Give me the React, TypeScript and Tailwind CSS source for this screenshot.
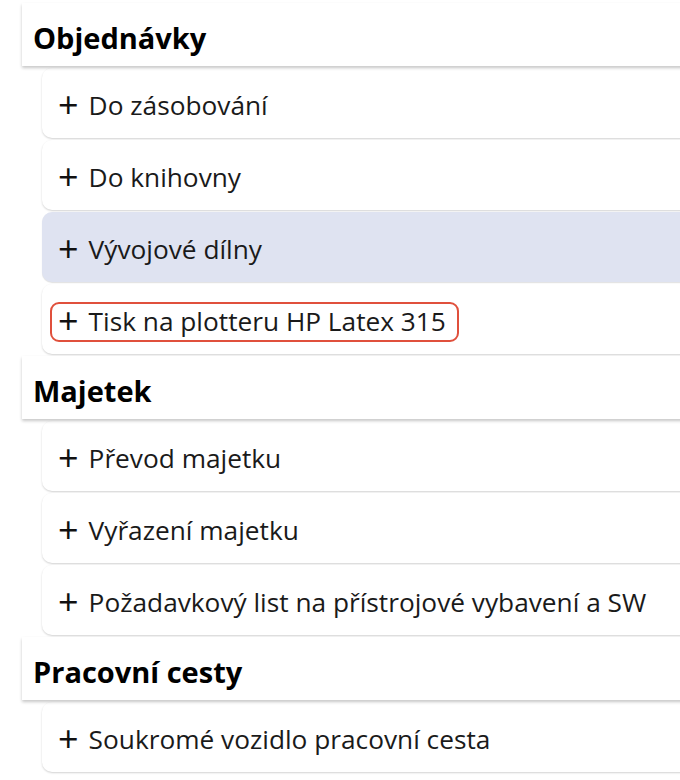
import React from 'react';

type Item = { label: string; active?: boolean; marked?: boolean };
type Section = { title: string; items: Item[] };

const sections: Section[] = [
  {
    title: 'Objednávky',
    items: [
      { label: 'Do zásobování' },
      { label: 'Do knihovny' },
      { label: 'Vývojové dílny', active: true },
      { label: 'Tisk na plotteru HP Latex 315', marked: true },
    ],
  },
  {
    title: 'Majetek',
    items: [
      { label: 'Převod majetku' },
      { label: 'Vyřazení majetku' },
      { label: 'Požadavkový list na přístrojové vybavení a SW' },
    ],
  },
  {
    title: 'Pracovní cesty',
    items: [{ label: 'Soukromé vozidlo pracovní cesta' }],
  },
];

const MenuItem: React.FC<{ item: Item }> = ({ item }) => {
  const content = (
    <>
      <span className="mr-[10px] text-[36px] leading-none font-normal text-[#111] -mt-[3px]">+</span>
      <span>{item.label}</span>
    </>
  );
  return (
    <div
      className={`ml-[42px] mb-[2px] h-[70px] rounded-[10px] flex items-center pt-[6px] ${
        item.active ? 'bg-[#dfe3f1] shadow-[0_1px_1px_rgba(0,0,0,0.12)]' : 'bg-white shadow-[0_1px_2px_rgba(0,0,0,0.18)]'
      } ${item.marked ? 'pl-[8px]' : 'pl-[16px]'}`}
    >
      {item.marked ? (
        <span className="flex items-center h-[40px] pl-[6px] pr-[11px] border-2 border-[#e0503c] rounded-[9px]">
          {content}
        </span>
      ) : (
        content
      )}
    </div>
  );
};

export default function App() {
  return (
    <div className="w-full h-[780px] overflow-hidden bg-white">
      <div
        className="w-[720px] pt-[3px] text-[26.25px] text-[#1a1a1a]"
        style={{ fontFamily: '"Open Sans", "Noto Sans", sans-serif' }}
      >
        {sections.map((section) => (
          <div key={section.title}>
            <div className="relative z-10 ml-[22px] mb-[2px] h-[63px] bg-white flex items-center pl-[11px] pt-[6px] shadow-[0_2px_3px_rgba(0,0,0,0.22)]">
              <span className="font-bold text-black text-[29px]">{section.title}</span>
            </div>
            {section.items.map((item) => (
              <MenuItem key={item.label} item={item} />
            ))}
          </div>
        ))}
      </div>
    </div>
  );
}
